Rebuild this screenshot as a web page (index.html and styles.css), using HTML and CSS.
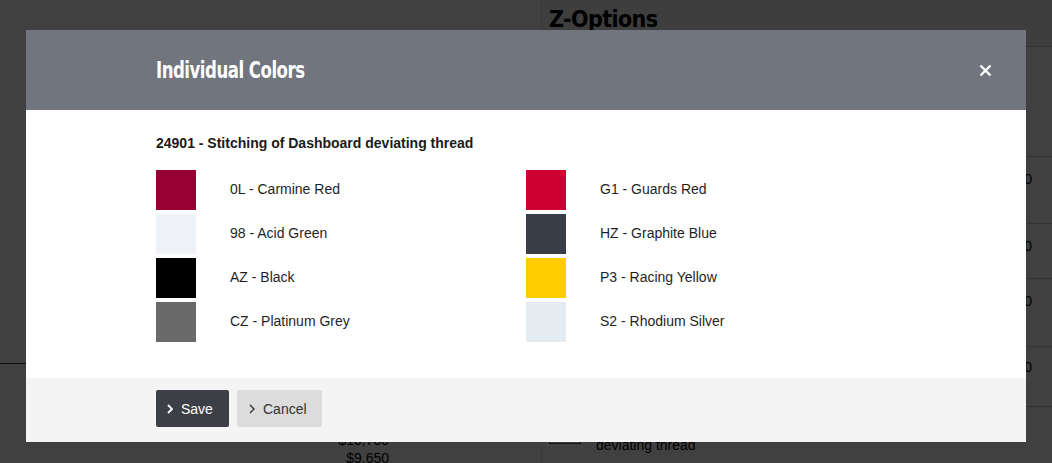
FILE: index.html
```html
<!DOCTYPE html>
<html>
<head>
<meta charset="utf-8">
<link rel="stylesheet" href="styles.css">
</head>
<body>
<div class="page">
  <div class="left-col">
    <div class="left-spacer"></div>
    <div class="left-row">
      <div class="price-old">$10,700</div>
      <div class="price">$9,650</div>
    </div>
  </div>
  <div class="right-col">
    <h2 class="zopt">Z-Options</h2>
    <div class="zrow zrow-first"></div>
    <div class="zrow zrow-a"><span class="zprice">$1,050</span></div>
    <div class="zrow zrow-b"><span class="zprice">$1,050</span></div>
    <div class="zrow zrow-c"><span class="zprice">$1,050</span></div>
    <div class="zrow zrow-d"><span class="zprice">$1,050</span></div>
    <div class="zrow zrow-e">
      <span class="zbox"></span>
      <span class="ztext">24901 - Stitching of Dashboard<br>deviating thread</span>
    </div>
  </div>
</div>

<div class="overlay">
  <div class="modal">
    <div class="modal-header">
      <h1 class="modal-title">Individual Colors</h1>
      <button class="close" aria-label="Close">
        <svg width="13" height="13" viewBox="0 0 13 13"><path d="M1.5 1.5 L11.5 11.5 M11.5 1.5 L1.5 11.5" stroke="#fff" stroke-width="2.4" fill="none"/></svg>
      </button>
    </div>
    <div class="modal-body">
      <h3 class="subtitle">24901 - Stitching of Dashboard deviating thread</h3>
      <div class="colors">
        <div class="color"><span class="swatch sw-carmine"></span><span class="label">0L - Carmine Red</span></div>
        <div class="color"><span class="swatch sw-guards"></span><span class="label">G1 - Guards Red</span></div>
        <div class="color"><span class="swatch sw-acid"></span><span class="label">98 - Acid Green</span></div>
        <div class="color"><span class="swatch sw-graphite"></span><span class="label">HZ - Graphite Blue</span></div>
        <div class="color"><span class="swatch sw-black"></span><span class="label">AZ - Black</span></div>
        <div class="color"><span class="swatch sw-yellow"></span><span class="label">P3 - Racing Yellow</span></div>
        <div class="color"><span class="swatch sw-platinum"></span><span class="label">CZ - Platinum Grey</span></div>
        <div class="color"><span class="swatch sw-rhodium"></span><span class="label">S2 - Rhodium Silver</span></div>
      </div>
    </div>
    <div class="modal-footer">
      <button class="btn btn-save"><svg class="chev" width="6" height="10" viewBox="0 0 6 10"><path d="M1 1 L5 5 L1 9" stroke="currentColor" stroke-width="1.8" fill="none"/></svg>Save</button>
      <button class="btn btn-cancel"><svg class="chev" width="6" height="10" viewBox="0 0 6 10"><path d="M1 1 L5 5 L1 9" stroke="currentColor" stroke-width="1.4" fill="none"/></svg>Cancel</button>
    </div>
  </div>
</div>
</body>
</html>
```

FILE: styles.css
```css
* { box-sizing: border-box; }
html, body { margin: 0; padding: 0; }
body {
  width: 1052px;
  height: 463px;
  overflow: hidden;
  font-family: "Liberation Sans", Arial, sans-serif;
  color: #222;
  background: #fff;
}

/* underlying page */
.page {
  display: flex;
  height: 463px;
  overflow: hidden;
}
.left-col {
  width: 541px;
  display: flex;
  flex-direction: column;
  background: #fff;
}
.left-spacer {
  flex: none;
  height: 364px;
  border-bottom: 1px solid #333;
  margin-right: 1px;
}
.left-row {
  flex: none;
  padding-top: 67px;
  padding-right: 152px;
  text-align: right;
  font-size: 14px;
  color: #000;
  line-height: 18px;
}
.right-col {
  flex: 1;
  background: #fff;
  display: flex;
  flex-direction: column;
  border-left: 1px solid #e8e8e8;
}
.zopt {
  flex: none;
  margin: 0;
  height: 47px;
  padding: 6px 0 0 7px;
  font-family: "DejaVu Sans", sans-serif;
  font-stretch: condensed;
  font-weight: bold;
  font-size: 23px;
  color: #000;
  letter-spacing: -0.6px;
  border-bottom: 1px solid #ccc;
  background: #f6f6f6;
}
.zrow {
  flex: none;
  border-bottom: 1px solid #c8c8c8;
  display: flex;
  align-items: flex-start;
  justify-content: flex-end;
  font-size: 14px;
  color: #000;
  padding: 14px 20px 0 0;
}
.zrow-first { height: 110px; }
.zrow-a { height: 67px; }
.zrow-b { height: 55px; }
.zrow-c { height: 68px; }
.zrow-d { height: 60px; padding-top: 12px; }
.zrow-e {
  height: 56px;
  border-bottom: none;
  justify-content: flex-start;
  padding: 0 0 0 7px;
  gap: 15px;
}
.zbox {
  width: 32px;
  height: 32px;
  border: 1px solid #555;
  margin-top: 5px;
}
.ztext { line-height: 20px; margin-top: 8px; }

/* overlay + modal */
.overlay {
  position: fixed;
  inset: 0;
  background: rgba(0, 0, 0, 0.75);
  padding: 30px 26px;
}
.modal {
  width: 1000px;
  background: #fff;
  display: flex;
  flex-direction: column;
}
.modal-header {
  height: 80px;
  background: #71757d;
  display: flex;
  align-items: center;
  justify-content: space-between;
  padding: 0 34px 0 130px;
}
.modal-title {
  margin: 0;
  color: #fff;
  font-family: "DejaVu Sans", sans-serif;
  font-stretch: condensed;
  font-weight: bold;
  font-size: 23px;
  letter-spacing: -0.6px;
  transform: scaleX(0.8);
  transform-origin: left center;
}
.close {
  background: none;
  border: 0;
  padding: 0;
  width: 13px;
  height: 13px;
  display: flex;
}
.modal-body {
  padding: 25px 130px 36px;
}
.subtitle {
  margin: 0 0 19px;
  font-size: 14px;
  font-weight: bold;
  line-height: 16px;
  color: #1b1b1b;
}
.colors {
  display: grid;
  grid-template-columns: 370px 370px;
  row-gap: 4px;
}
.color {
  display: flex;
  align-items: center;
  gap: 34px;
  height: 40px;
}
.swatch {
  width: 40px;
  height: 40px;
  flex: none;
}
.label {
  font-size: 14px;
  color: #1f1f1f;
  position: relative;
  top: -1px;
}
.sw-carmine { background: #960032; }
.sw-guards { background: #ce0033; }
.sw-acid { background: #eef2f6; }
.sw-graphite { background: #393d45; }
.sw-black { background: #000; }
.sw-yellow { background: #ffcc00; }
.sw-platinum { background: #696969; }
.sw-rhodium { background: #e4ebf1; }

.modal-footer {
  height: 64px;
  background: #f4f4f4;
  padding: 12px 130px;
  display: flex;
  gap: 8px;
}
.btn {
  height: 37px;
  border: 0;
  border-radius: 2px;
  font-family: "Liberation Sans", Arial, sans-serif;
  font-size: 14px;
  display: flex;
  align-items: center;
  gap: 8px;
  padding: 0 0 0 11px;
}
.btn-save {
  width: 73px;
  background: #3c3f46;
  color: #fff;
}
.btn-cancel {
  width: 85px;
  background: #dcdcdc;
  color: #333;
  padding-left: 12px;
}
.chev { flex: none; }
```
